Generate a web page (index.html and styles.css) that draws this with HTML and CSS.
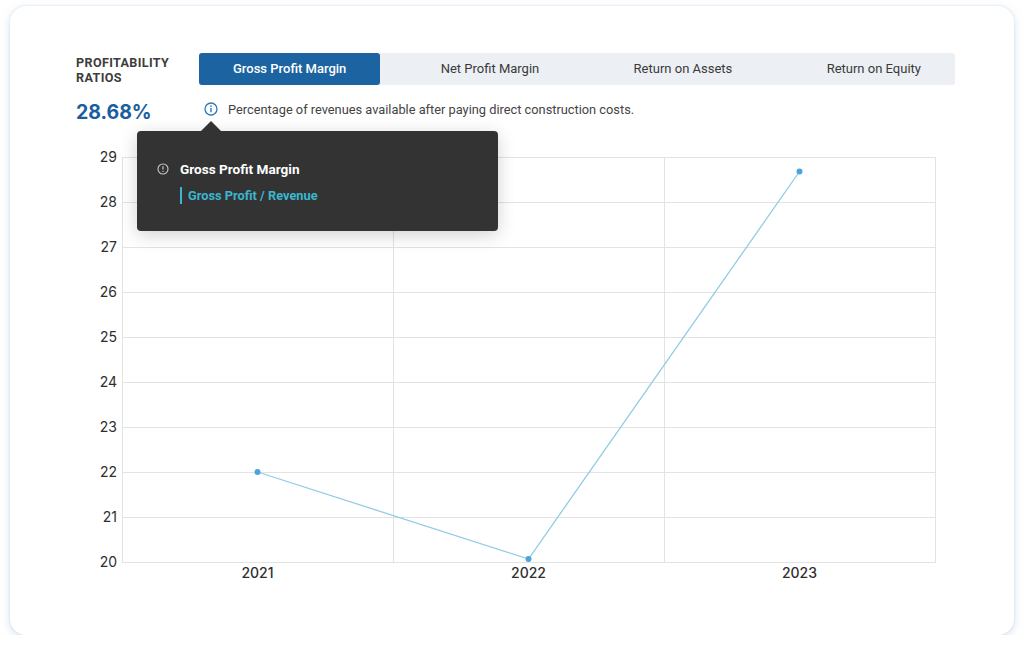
FILE: index.html
```html
<!DOCTYPE html>
<html>
<head>
<meta charset="utf-8">
<link rel="stylesheet" href="styles.css">
</head>
<body>
<div class="card">
  <div class="top">
    <div class="label">PROFITABILITY<br>RATIOS</div>
    <div class="tabs">
      <div class="tab active">Gross Profit Margin</div>
      <div class="tab">Net Profit Margin</div>
      <div class="tab">Return on Assets</div>
      <div class="tab">Return on Equity</div>
    </div>
    <div class="value">28.68%</div>
    <div class="desc">
      <svg class="info" width="14" height="14" viewBox="0 0 14 14"><circle cx="7" cy="7" r="6" fill="none" stroke="#2c78b8" stroke-width="1.3"/><line x1="7" y1="6" x2="7" y2="10.2" stroke="#2c78b8" stroke-width="1.4"/><circle cx="7" cy="4.1" r="0.85" fill="#2c78b8"/></svg>
      <span>Percentage of revenues available after paying direct construction costs.</span>
    </div>
  </div>
  <svg class="chart" width="1004" height="460" viewBox="0 0 1004 460">
    <g stroke="#e3e3e3" stroke-width="1">
      <line x1="112" y1="17.5" x2="925" y2="17.5"/>
      <line x1="112" y1="62.5" x2="925" y2="62.5"/>
      <line x1="112" y1="107.5" x2="925" y2="107.5"/>
      <line x1="112" y1="152.5" x2="925" y2="152.5"/>
      <line x1="112" y1="197.5" x2="925" y2="197.5"/>
      <line x1="112" y1="242.5" x2="925" y2="242.5"/>
      <line x1="112" y1="287.5" x2="925" y2="287.5"/>
      <line x1="112" y1="332.5" x2="925" y2="332.5"/>
      <line x1="112" y1="377.5" x2="925" y2="377.5"/>
      <line x1="112" y1="422.5" x2="925" y2="422.5"/>
      <line x1="112.5" y1="17" x2="112.5" y2="423"/>
      <line x1="383.5" y1="17" x2="383.5" y2="423"/>
      <line x1="654.5" y1="17" x2="654.5" y2="423"/>
      <line x1="925.5" y1="17" x2="925.5" y2="423"/>
    </g>
    <g class="ylab" text-anchor="end">
      <text x="107" y="22">29</text>
      <text x="107" y="67">28</text>
      <text x="107" y="112">27</text>
      <text x="107" y="157">26</text>
      <text x="107" y="202">25</text>
      <text x="107" y="247">24</text>
      <text x="107" y="292">23</text>
      <text x="107" y="337">22</text>
      <text x="107" y="382">21</text>
      <text x="107" y="427">20</text>
    </g>
    <g class="xlab" text-anchor="middle">
      <text x="247.5" y="438">2021</text>
      <text x="518.5" y="438">2022</text>
      <text x="789.5" y="438">2023</text>
    </g>
    <polyline points="247.5,332 518.5,419 789.5,31.5" fill="none" stroke="#93cbe6" stroke-width="1.3"/>
    <g fill="#4ca5d8">
      <circle cx="247.5" cy="332" r="3"/>
      <circle cx="518.5" cy="419" r="3"/>
      <circle cx="789.5" cy="31.5" r="3"/>
    </g>
  </svg>
  <div class="tooltip">
    <div class="tt-title">
      <svg width="12" height="12" viewBox="0 0 12 12"><circle cx="6" cy="6" r="5" fill="none" stroke="#c8c8c8" stroke-width="1.1"/><line x1="6" y1="3.2" x2="6" y2="6.6" stroke="#c8c8c8" stroke-width="1.2"/><circle cx="6" cy="8.4" r="0.7" fill="#c8c8c8"/></svg>
      <span>Gross Profit Margin</span>
    </div>
    <div class="tt-formula">Gross Profit / Revenue</div>
  </div>
</div>
</body>
</html>
```

FILE: styles.css
```css
* { box-sizing: border-box; }
html, body { margin: 0; padding: 0; background: #ffffff; }
body {
  font-family: Roboto, "Liberation Sans", Arial, sans-serif;
  color: #333;
  padding: 6px 10px 0 10px;
}
.card {
  position: relative;
  width: 1004px;
  height: 629px;
  background: #fff;
  border-radius: 16px;
  box-shadow: 0 0 2px rgba(190, 210, 235, 0.8), 0 3px 10px rgba(185, 205, 232, 0.55);
}
.top {
  display: grid;
  grid-template-columns: 123px 756px;
  grid-template-rows: 32px 26px;
  row-gap: 12px;
  padding: 47px 0 0 66px;
}
.label {
  font-size: 12.6px;
  line-height: 15px;
  font-weight: 700;
  color: #3d3d3d;
  letter-spacing: 0.35px;
  padding-top: 2px;
}
.tabs {
  display: flex;
  justify-content: space-between;
  background: #eceff3;
  border-radius: 3px;
}
.tab {
  padding: 0 34px;
  font-size: 13px;
  line-height: 32px;
  color: #3a3a3a;
  white-space: nowrap;
}
.tab.active {
  background: #1b64a1;
  color: #fff;
  border-radius: 3px;
  font-weight: 500;
}
.value {
  font-family: Inter, Roboto, sans-serif;
  font-size: 19.5px;
  font-weight: 700;
  color: #1b5e9e;
  line-height: 26px;
  padding-top: 2px;
}
.desc {
  display: flex;
  align-items: center;
  gap: 10px;
  padding-left: 5px;
  font-size: 12.8px;
  color: #444;
  height: 24px;
}
.info { flex: none; }
.chart {
  display: block;
  margin-top: 17px;
}
.ylab text {
  font-family: Inter, Roboto, sans-serif;
  font-size: 14px;
  fill: #2e2e2e;
}
.xlab text {
  font-family: Inter, Roboto, sans-serif;
  font-size: 14px;
  font-weight: 500;
  fill: #2e2e2e;
}
.tooltip {
  position: absolute;
  left: 127px;
  top: 125px;
  width: 361px;
  height: 100px;
  background: #333333;
  border-radius: 4px;
  padding: 29px 0 0 20px;
  box-shadow: 0 4px 18px rgba(0, 0, 0, 0.18);
}
.tooltip::before {
  content: "";
  position: absolute;
  left: 64px;
  top: -10px;
  border-left: 10px solid transparent;
  border-right: 10px solid transparent;
  border-bottom: 10px solid #333333;
}
.tt-title {
  display: flex;
  align-items: center;
  gap: 11px;
  font-size: 13.6px;
  font-weight: 700;
  color: #fff;
  line-height: 18px;
}
.tt-title svg { flex: none; }
.tt-formula {
  margin: 9px 0 0 23px;
  border-left: 2px solid #3ab6cf;
  padding-left: 6px;
  font-size: 12.8px;
  font-weight: 700;
  color: #3ab6cf;
  line-height: 17px;
}
```
